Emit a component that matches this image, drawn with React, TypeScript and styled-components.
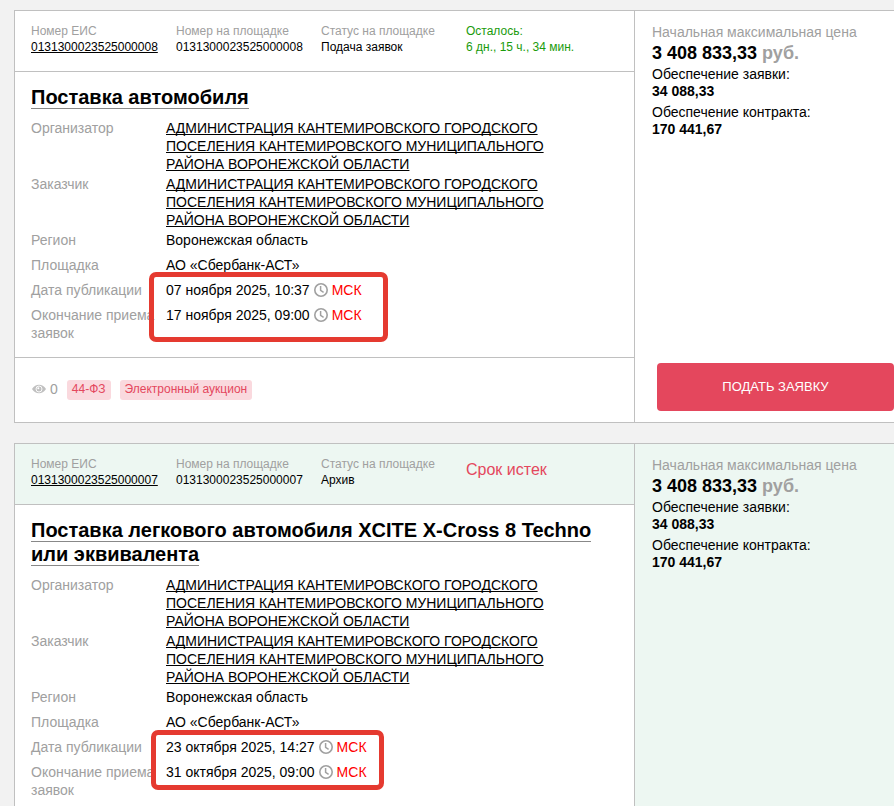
import React from "react";
import styled, { createGlobalStyle, css } from "styled-components";

const GlobalStyle = createGlobalStyle`
  *, *::before, *::after { box-sizing: border-box; }
  html { scrollbar-width: none; }
  body {
    margin: 0;
    background: #f2f2f2;
    color: #000;
    font-family: Arial, "Liberation Sans", sans-serif;
    font-size: 14px;
    line-height: 18px;
  }
`;

const muted = "#a0a0a0";
const line = "#c0c0c0";
const accent = "#e4475d";

const List = styled.main`
  display: flex;
  flex-direction: column;
  gap: 20px;
  padding: 10px 0 20px 14px;
`;

const Card = styled.article`
  display: grid;
  grid-template-columns: minmax(0, 620px) minmax(238px, 1fr);
  background: #fff;
  border: 1px solid ${line};
  border-right: 0;
`;

const Main = styled.div`
  display: flex;
  flex-direction: column;
  border-right: 1px solid ${line};
`;

const Header = styled.header<{ $archived: boolean }>`
  display: grid;
  grid-template-columns: repeat(3, 145px) 1fr;
  padding: 12px 0 16px 16px;
  border-bottom: 1px solid ${line};
  background: ${(p) => (p.$archived ? "#edf7f2" : "#fff")};
  font-size: 12px;
  line-height: 16px;
`;

const HeaderCell = styled.div<{ $green?: boolean }>`
  display: flex;
  flex-direction: column;
  align-items: flex-start;
  ${(p) => p.$green && css`color: #1a9b0c;`}
`;

const Muted = styled.span`
  color: ${muted};
`;

const Link = styled.a`
  color: #000;
  text-decoration: underline;
  text-decoration-skip-ink: none;
`;

const Expired = styled.div`
  padding-top: 5px;
  color: ${accent};
  font-size: 16px;
  line-height: 18px;
`;

const Body = styled.section`
  padding: 13px 16px;
`;

const Title = styled.h2`
  margin: 0 0 10px;
  font-size: 20px;
  line-height: 24px;
`;

const TitleLink = styled.a`
  color: #000;
  text-decoration: none;
  border-bottom: 1px solid #888;
`;

const Details = styled.dl`
  margin: 0;
`;

const Row = styled.div`
  display: grid;
  grid-template-columns: 135px minmax(0, 400px);
  min-height: 23px;
  margin-bottom: 2px;
`;

const Term = styled.dt`
  color: ${muted};
`;

const Value = styled.dd`
  margin: 0;
`;

const Dates = styled.div`
  position: relative;
`;

const Highlight = styled.div<{ $archived: boolean }>`
  position: absolute;
  top: ${(p) => (p.$archived ? "-8px" : "-9px")};
  left: ${(p) => (p.$archived ? "120px" : "118px")};
  width: ${(p) => (p.$archived ? "233px" : "239px")};
  height: ${(p) => (p.$archived ? "60px" : "70px")};
  border: 5px solid #e53a30;
  border-radius: 7px;
  pointer-events: none;
`;

const DateValue = styled(Value)`
  display: flex;
  gap: 4px;
  svg { margin-top: 2px; }
`;

const Zone = styled.span`
  color: #f00;
`;

const Footer = styled.footer`
  display: flex;
  align-items: center;
  height: 65px;
  padding-left: 17px;
  border-top: 1px solid ${line};
`;

const Views = styled.span`
  display: flex;
  align-items: center;
  gap: 4px;
  margin: 0 9px 3px 0;
  color: ${muted};
`;

const Tag = styled.span`
  margin-right: 9px;
  padding: 0 5px 2px;
  border-radius: 3px;
  background: #fad9de;
  color: ${accent};
  font-size: 12px;
  line-height: 18px;
`;

const Side = styled.aside<{ $archived: boolean }>`
  display: flex;
  flex-direction: column;
  padding: 12px 0 11px 17px;
  background: ${(p) => (p.$archived ? "#edf7f2" : "#fff")};
`;

const Price = styled.strong`
  margin-bottom: 1px;
  font-size: 18px;
  line-height: 24px;
`;

const Deposit = styled.div`
  display: flex;
  flex-direction: column;
  margin-bottom: 4px;
  line-height: 17px;
`;

const Submit = styled.button`
  height: 48px;
  margin: auto 0 0 5px;
  border: 0;
  border-radius: 4px;
  background: ${accent};
  color: #fff;
  font: 13px/18px Arial, "Liberation Sans", sans-serif;
  text-transform: uppercase;
  cursor: pointer;
`;

const Clock = () => (
  <svg width="14" height="14" viewBox="0 0 14 14" fill="none" stroke="#a0a0a0" aria-hidden="true">
    <circle cx="7" cy="7" r="6.200" strokeWidth="1.600" />
    <path d="M6.600 3V7.400L9.600 9.300" strokeWidth="1.500" />
  </svg>
);

const Eye = () => (
  <svg width="14" height="10" viewBox="0 0 14 10" aria-hidden="true">
    <path d="M0 5C2 2 4.200 .7 7 .7S12 2 14 5C12 8 9.800 9.300 7 9.300S2 8 0 5Z" fill="#c0c0c0" />
    <circle cx="7" cy="5" r="3" fill="none" stroke="#fff" strokeWidth=".9" />
    <circle cx="6.300" cy="4.200" r="1" fill="#fff" />
  </svg>
);

type Tender = {
  id: string;
  status: string;
  title: string;
  left?: string;
  published: string;
  deadline: string;
};

const tenders: Tender[] = [
  {
    id: "0131300023525000008",
    status: "Подача заявок",
    title: "Поставка автомобиля",
    left: "6 дн., 15 ч., 34 мин.",
    published: "07 ноября 2025, 10:37",
    deadline: "17 ноября 2025, 09:00",
  },
  {
    id: "0131300023525000007",
    status: "Архив",
    title: "Поставка легкового автомобиля XCITE X-Cross 8 Techno или эквивалента",
    published: "23 октября 2025, 14:27",
    deadline: "31 октября 2025, 09:00",
  },
];

const customer =
  "АДМИНИСТРАЦИЯ КАНТЕМИРОВСКОГО ГОРОДСКОГО ПОСЕЛЕНИЯ КАНТЕМИРОВСКОГО МУНИЦИПАЛЬНОГО РАЙОНА ВОРОНЕЖСКОЙ ОБЛАСТИ";

const Detail = ({ term, children }: { term: string; children: React.ReactNode }) => (
  <Row>
    <Term>{term}</Term>
    <Value>{children}</Value>
  </Row>
);

const DateRow = ({ term, date }: { term: string; date: string }) => (
  <Row>
    <Term>{term}</Term>
    <DateValue>
      {date}
      <Clock />
      <Zone>МСК</Zone>
    </DateValue>
  </Row>
);

const TenderCard = ({ tender }: { tender: Tender }) => {
  const archived = !tender.left;
  return (
    <Card>
      <Main>
        <Header $archived={archived}>
          <HeaderCell>
            <Muted>Номер ЕИС</Muted>
            <Link href="#eis">{tender.id}</Link>
          </HeaderCell>
          <HeaderCell>
            <Muted>Номер на площадке</Muted>
            <span>{tender.id}</span>
          </HeaderCell>
          <HeaderCell>
            <Muted>Статус на площадке</Muted>
            <span>{tender.status}</span>
          </HeaderCell>
          {archived ? (
            <Expired>Срок истек</Expired>
          ) : (
            <HeaderCell $green>
              <span>Осталось:</span>
              <span>{tender.left}</span>
            </HeaderCell>
          )}
        </Header>
        <Body>
          <Title>
            <TitleLink href="#tender">{tender.title}</TitleLink>
          </Title>
          <Details>
            <Detail term="Организатор"><Link href="#organizer">{customer}</Link></Detail>
            <Detail term="Заказчик"><Link href="#customer">{customer}</Link></Detail>
            <Detail term="Регион">Воронежская область</Detail>
            <Detail term="Площадка">АО «Сбербанк-АСТ»</Detail>
          </Details>
          <Dates>
            <Details>
              <DateRow term="Дата публикации" date={tender.published} />
              <DateRow term="Окончание приема заявок" date={tender.deadline} />
            </Details>
            <Highlight $archived={archived} />
          </Dates>
        </Body>
        {!archived && (
          <Footer>
            <Views><Eye />0</Views>
            <Tag>44-ФЗ</Tag>
            <Tag>Электронный аукцион</Tag>
          </Footer>
        )}
      </Main>
      <Side $archived={archived}>
        <Muted>Начальная максимальная цена</Muted>
        <Price>3 408 833,33 <Muted>руб.</Muted></Price>
        <Deposit>Обеспечение заявки:<strong>34 088,33</strong></Deposit>
        <Deposit>Обеспечение контракта:<strong>170 441,67</strong></Deposit>
        {!archived && <Submit type="button">Подать заявку</Submit>}
      </Side>
    </Card>
  );
};

export default function App() {
  return (
    <>
      <GlobalStyle />
      <List>
        {tenders.map((t) => <TenderCard key={t.id} tender={t} />)}
      </List>
    </>
  );
}
